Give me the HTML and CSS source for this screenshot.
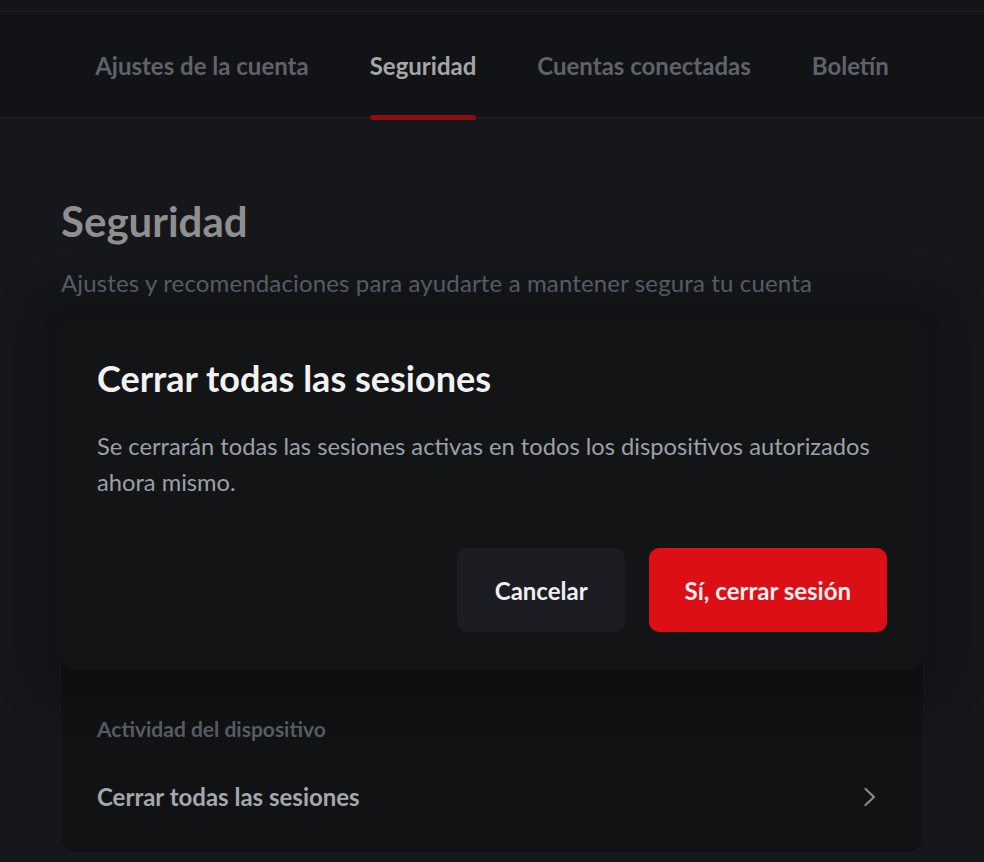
FILE: index.html
```html
<!DOCTYPE html>
<html lang="es">
<head>
<meta charset="utf-8">
<title>Seguridad</title>
<link rel="stylesheet" href="styles.css">
</head>
<body>
<div class="topbar"></div>
<nav class="tabs">
  <a class="tab">Ajustes de la cuenta</a>
  <a class="tab active">Seguridad</a>
  <a class="tab">Cuentas conectadas</a>
  <a class="tab">Boletín</a>
</nav>
<main class="page">
  <h1 class="page-title">Seguridad</h1>
  <p class="page-sub">Ajustes y recomendaciones para ayudarte a mantener segura tu cuenta</p>
  <section class="card">
    <div class="card-label">Actividad del dispositivo</div>
    <div class="card-row">
      <span>Cerrar todas las sesiones</span>
      <svg class="chev" width="14" height="20" viewBox="0 0 14 20"><polyline points="2.5 2 11 10 2.5 18" fill="none" stroke="#8a8a8a" stroke-width="2.2" stroke-linecap="round" stroke-linejoin="round"/></svg>
    </div>
  </section>
</main>
<div class="modal">
  <h2 class="modal-title">Cerrar todas las sesiones</h2>
  <p class="modal-text">Se cerrarán todas las sesiones activas en todos los dispositivos autorizados ahora mismo.</p>
  <div class="modal-actions">
    <button class="btn btn-cancel">Cancelar</button>
    <button class="btn btn-danger">Sí, cerrar sesión</button>
  </div>
</div>
</body>
</html>
```
FILE: styles.css
```css
* { box-sizing: border-box; }
html, body { margin: 0; padding: 0; }
body {
  background: #16171a;
  font-family: Lato, "Open Sans", sans-serif;
  min-height: 862px;
  position: relative;
  overflow: hidden;
}
.topbar {
  height: 12px;
  background: #141518;
  border-bottom: 1px solid #1c1d21;
}
.tabs {
  height: 107px;
  background: #121316;
  border-bottom: 2px solid #1d1e22;
  display: flex;
  justify-content: center;
  gap: 61px;
}
.tab {
  position: relative;
  display: flex;
  align-items: center;
  padding-top: 1px;
  font-size: 24px;
  font-weight: 700;
  color: #5f626a;
}
.tab.active { color: #a6a6a6; }
.tab.active::after {
  content: "";
  position: absolute;
  left: 0;
  right: 0;
  bottom: -3px;
  height: 5px;
  border-radius: 3px;
  background: #8b0f12;
}
.page { padding: 0 61px; }
.page-title {
  margin: 77px 0 0;
  font-size: 42px;
  line-height: 50px;
  font-weight: 700;
  color: #8f8f8f;
}
.page-sub {
  margin: 22px 0 0;
  font-size: 24px;
  line-height: 30px;
  letter-spacing: 0.14px;
  color: #5d6570;
}
.card {
  margin-top: 32px;
  height: 522px;
  background: #111214;
  border-radius: 16px;
  padding: 0 36px 20px;
  display: flex;
  flex-direction: column;
  justify-content: flex-end;
}
.card-label {
  font-size: 21px;
  line-height: 26px;
  font-weight: 700;
  color: #575c65;
  margin-bottom: 20px;
}
.card-row {
  display: flex;
  align-items: center;
  justify-content: space-between;
  padding: 22px 10px 22px 0;
  font-size: 24px;
  line-height: 26px;
  font-weight: 700;
  color: #a4a7ac;
}
.modal {
  position: absolute;
  top: 320px;
  left: 61px;
  width: 862px;
  padding: 36px 36px 38px;
  background: #131416;
  border-radius: 16px;
  box-shadow: 0 0 30px 40px rgba(0, 0, 0, 0.14);
}
.modal-title {
  margin: 0;
  font-size: 36px;
  line-height: 44px;
  font-weight: 700;
  color: #f2f2f2;
}
.modal-text {
  margin: 28px 0 0;
  font-size: 23.7px;
  line-height: 36px;
  color: #9aa0aa;
}
.modal-actions {
  margin-top: 48px;
  display: flex;
  justify-content: flex-end;
  gap: 24px;
}
.btn {
  height: 84px;
  padding: 0 37px 0 38px;
  border: 0;
  border-radius: 10px;
  font-family: Lato, "Open Sans", sans-serif;
  font-size: 24px;
  font-weight: 700;
}
.btn-cancel { background: #1b1d22; color: #f0f0f0; }
.btn-danger { background: #dc0f16; color: #fbeeee; padding: 0 36px; }
```
